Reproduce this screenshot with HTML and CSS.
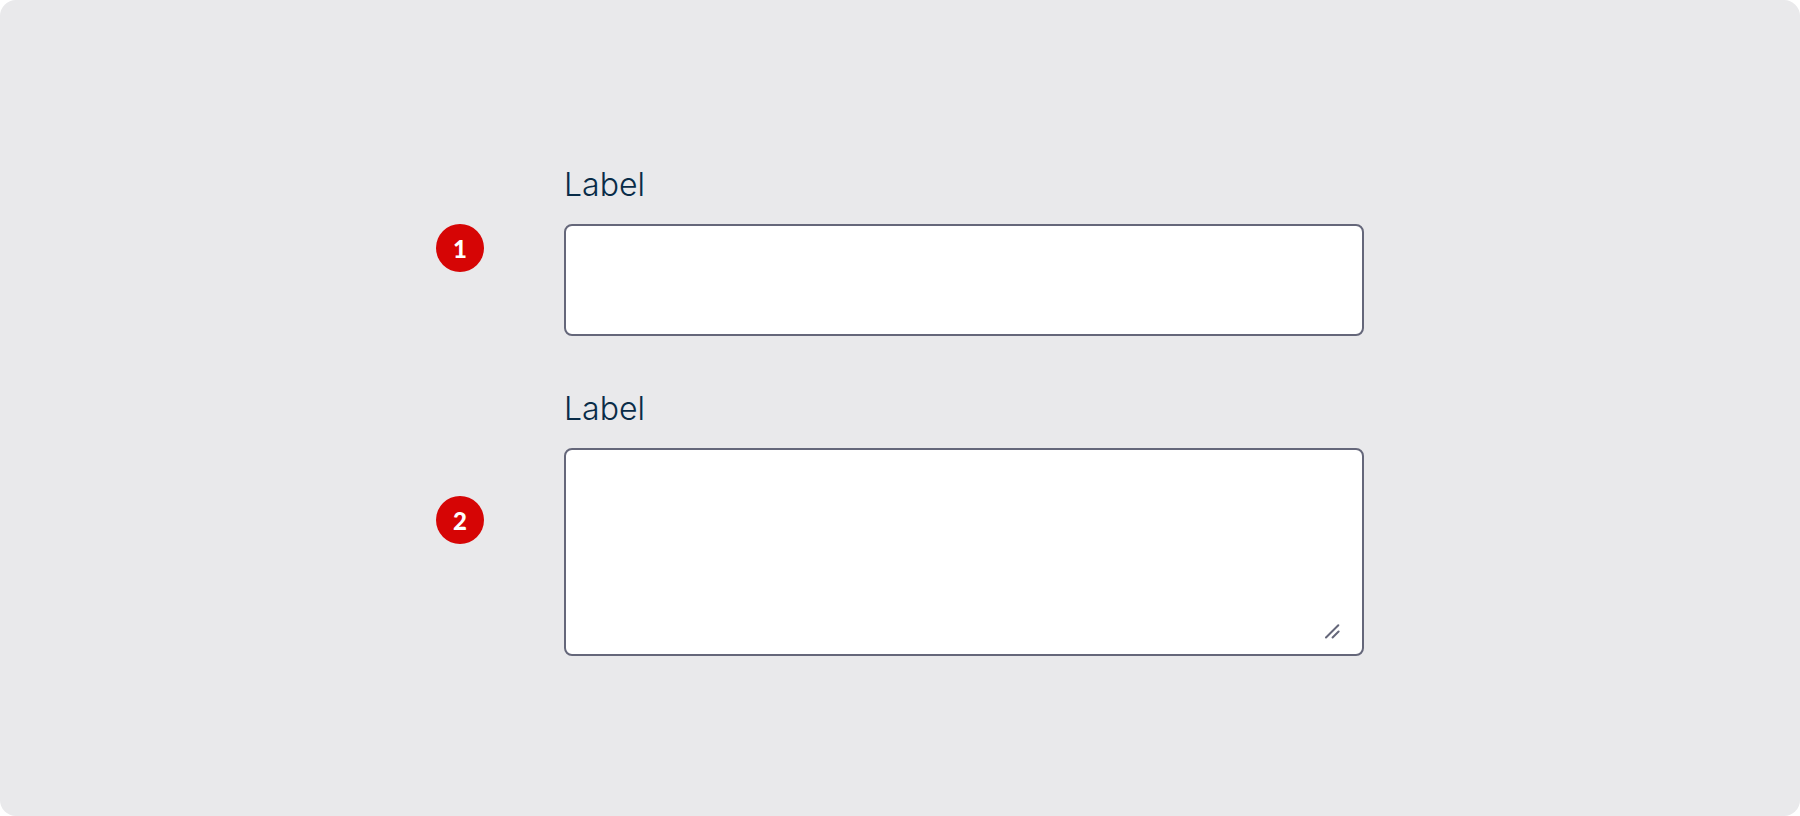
FILE: index.html
```html
<!DOCTYPE html>
<html lang="en">
<head>
    <meta charset="UTF-8">
    <meta name="viewport" content="width=device-width, initial-scale=1.0">
    <title>Text fields</title>
    <link rel="stylesheet" href="styles.css">
</head>
<body>
    <main class="stage">
        <div class="fields">
            <div class="field">
                <label for="text-input">Label</label>
                <span class="marker">1</span>
                <input type="text" id="text-input" class="control" autocomplete="off">
            </div>
            <div class="field field-multiline">
                <label for="text-area">Label</label>
                <span class="marker">2</span>
                <div class="textarea-wrap">
                    <textarea id="text-area" class="control"></textarea>
                    <svg class="resize-handle" width="16" height="16" viewBox="0 0 16 16" aria-hidden="true">
                        <path d="M2 13.5 14.3 1.2M8.6 13.5 14.6 7.5" />
                    </svg>
                </div>
            </div>
        </div>
    </main>
</body>
</html>
```

FILE: styles.css
```css
* {
    margin: 0;
    padding: 0;
    box-sizing: border-box;
    font-family: Inter, "Liberation Sans", sans-serif;
}

body {
    background: #ffffff;
}

.stage {
    min-height: 100vh;
    padding: 48px;
    display: flex;
    align-items: center;
    justify-content: center;
    background: #e9e9eb;
    border-radius: 16px;
}

.fields {
    width: 100%;
    max-width: 928px;
    display: flex;
    flex-direction: column;
    gap: 48px;
}

.field {
    display: grid;
    grid-template-columns: 48px 1fr;
    column-gap: 80px;
    row-gap: 14px;
    align-items: start;
}

.field label {
    grid-column: 2;
    font-size: 32px;
    font-weight: 350;
    line-height: 50px;
    color: #092c48;
}

.marker {
    height: 48px;
    border-radius: 50%;
    background: #d60505;
    color: #ffffff;
    font-family: Lato, sans-serif;
    font-size: 24px;
    font-weight: 900;
    line-height: 50px;
    text-align: center;
}

.field-multiline .marker {
    margin-top: 48px;
}

.control {
    display: block;
    width: 100%;
    height: 112px;
    padding: 24px;
    border: 2px solid #65677a;
    border-radius: 8px;
    background: #ffffff;
    color: #092c48;
    font-size: 32px;
    outline: none;
}

.control:focus {
    border-color: #092c48;
}

.textarea-wrap {
    position: relative;
}

textarea.control {
    height: 208px;
    resize: none;
}

.resize-handle {
    position: absolute;
    right: 24px;
    bottom: 16px;
    fill: none;
    stroke: #65677a;
    stroke-width: 2;
    stroke-linecap: round;
    pointer-events: none;
}
```
